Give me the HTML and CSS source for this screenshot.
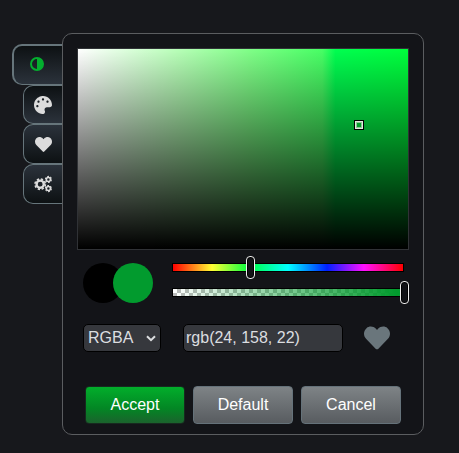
FILE: index.html
```html
<!DOCTYPE html>
<html lang="en">
<head>
<meta charset="utf-8">
<title>Color picker</title>
<link rel="stylesheet" href="styles.css">
</head>
<body>
<div class="picker">
  <nav class="tabs">
    <button class="tab active" aria-label="Adjust"><svg width="14" height="14" viewBox="0 0 14 14"><circle cx="7" cy="7" r="6" fill="none" stroke="currentColor" stroke-width="2"/><path fill="currentColor" d="M7 1a6 6 0 0 1 0 12z"/></svg></button>
    <button class="tab" aria-label="Palette"><svg width="18" height="18" viewBox="0 0 512 512"><path fill="currentColor" d="M204.3 5C104.9 24.4 24.8 104.3 5.2 203.4c-37 187 131.7 326.4 258.8 306.7 41.2-6.4 61.4-54.6 42.5-91.7-23.1-45.4 9.9-98.4 60.9-98.4h79.7c35.8 0 64.8-29.6 64.9-65.3C511.5 97.1 368.1-26.9 204.3 5zM96 320c-17.7 0-32-14.3-32-32s14.3-32 32-32 32 14.3 32 32-14.3 32-32 32zm32-128c-17.7 0-32-14.3-32-32s14.3-32 32-32 32 14.3 32 32-14.3 32-32 32zm128-64c-17.7 0-32-14.3-32-32s14.3-32 32-32 32 14.3 32 32-14.3 32-32 32zm128 64c-17.7 0-32-14.3-32-32s14.3-32 32-32 32 14.3 32 32-14.3 32-32 32z"/></svg></button>
    <button class="tab flip" aria-label="Favorites"><svg width="17" height="17" viewBox="0 0 512 512"><path fill="currentColor" d="M462.3 62.6C407.5 15.9 326 24.3 275.7 76.2L256 96.5l-19.7-20.3C186.1 24.3 104.5 15.9 49.7 62.6c-62.8 53.6-66.1 149.8-9.9 207.9l193.5 199.8c12.5 12.9 32.8 12.9 45.3 0l193.5-199.8c56.3-58.1 53-154.3-9.8-207.9z"/></svg></button>
    <button class="tab flip" aria-label="Settings"><svg width="18" height="18" viewBox="0 0 18 18" fill="none" stroke="currentColor"><circle cx="6.2" cy="9.2" r="3.6" stroke-width="2.4"/><circle cx="6.2" cy="9.2" r="5.2" stroke-width="1.6" stroke-dasharray="2.3 1.784"/><g id="cog"><circle cx="14.4" cy="4.4" r="2" stroke-width="1.5"/><circle cx="14.4" cy="4.4" r="3" stroke-width="1.1" stroke-dasharray="1.8 1.342"/></g><use href="#cog" y="9.2"/></svg></button>
  </nav>
  <main class="panel">
    <div class="field"><span class="marker"></span></div>
    <div class="controls">
      <div class="swatches"><span class="swatch old"></span><span class="swatch new"></span></div>
      <div class="sliders">
        <div class="track hue"><span class="thumb"></span></div>
        <div class="track alpha"><span class="thumb"></span></div>
      </div>
    </div>
    <div class="inputs">
      <div class="format">RGBA<svg width="10" height="7" viewBox="0 0 10 7"><path d="M1 1.2l4 4 4-4" fill="none" stroke="currentColor" stroke-width="2"/></svg></div>
      <div class="value">rgb(24, 158, 22)</div>
      <svg class="fav" width="26" height="26" viewBox="0 0 512 512"><path fill="currentColor" d="M462.3 62.6C407.5 15.9 326 24.3 275.7 76.2L256 96.5l-19.7-20.3C186.1 24.3 104.5 15.9 49.7 62.6c-62.8 53.6-66.1 149.8-9.9 207.9l193.5 199.8c12.5 12.9 32.8 12.9 45.3 0l193.5-199.8c56.3-58.1 53-154.3-9.8-207.9z"/></svg>
    </div>
    <div class="actions">
      <button class="btn accept">Accept</button>
      <button class="btn">Default</button>
      <button class="btn">Cancel</button>
    </div>
  </main>
</div>
</body>
</html>
```
FILE: styles.css
```css
* { box-sizing: border-box; }
body {
  margin: 0;
  height: 453px;
  overflow: hidden;
  background: #17181c;
  color: #dcdee0;
  font: 16px/20px "Liberation Sans", Arial, sans-serif;
}
.picker { display: flex; padding: 33px 0 0 12px; }
.tabs {
  display: flex;
  flex-direction: column;
  align-items: flex-end;
  width: 50px;
  padding-top: 11px;
}
.tab {
  display: flex;
  align-items: center;
  justify-content: center;
  width: 39px;
  height: 40px;
  padding: 0;
  border: 1px solid #66757b;
  border-right: 0;
  border-radius: 10px 0 0 10px;
  background: linear-gradient(#0d1113, #2b323b);
  color: #dcdcdc;
}
.tab.active {
  width: 50px;
  height: 41px;
  padding: 0 2px 2px 0;
  border-width: 2px 0 1px 2px;
  color: #04af2f;
}
.tab.flip { background: linear-gradient(#2b323b, #0d1113); }
.tab:nth-child(2) { height: 39px; }
.panel {
  width: 362px;
  height: 402px;
  padding: 14px;
  border: 1px solid #5b5d60;
  border-radius: 10px;
  background: #131418;
}
.field {
  position: relative;
  width: 332px;
  height: 202px;
  border: 1px solid #303236;
  background:
    linear-gradient(transparent, #000),
    linear-gradient(90deg, #fff, #b8ffb8 30%, #80ff88 52%, #48ff65 74%, #00ff50 78%, #00ff3c);
  background-clip: padding-box;
}
.marker {
  position: absolute;
  left: 276px;
  top: 71px;
  width: 10px;
  height: 10px;
  border: 1px solid #000;
  background: #049c2c;
  box-shadow: inset 0 0 0 1px #e0ebdf, inset 0 0 0 2px #8fc996;
}
.controls {
  display: flex;
  gap: 19px;
  height: 60px;
  padding: 13px 0 0 6px;
}
.swatches { display: flex; width: 70px; }
.swatch { flex: none; width: 40px; height: 40px; border-radius: 50%; }
.old { background: #000; }
.new { margin-left: -10px; background: #029b2e; }
.sliders { display: flex; flex-direction: column; gap: 16px; }
.track { position: relative; width: 232px; height: 9px; border: 1px solid #000; }
.hue { background: linear-gradient(90deg, #f00, #ff3 17%, #00ff40 33%, #0ff 50%, #0020ff 67%, #ff10ff 83%, #f00) padding-box; }
.alpha {
  background:
    linear-gradient(90deg, transparent, #029b2e 97%),
    repeating-conic-gradient(#bbb 0 25%, #fff 0 50%) 0 0 / 8px 8px;
}
.thumb {
  position: absolute;
  top: -8px;
  left: 73px;
  width: 9px;
  height: 23px;
  border: 1px solid #eee;
  border-radius: 4px;
  background: #111216;
  box-shadow: inset 0 0 0 1px #000;
}
.alpha .thumb { left: 227px; }
.inputs { display: flex; align-items: center; height: 28px; margin-top: 14px; padding-left: 6px; }
.format, .value {
  display: flex;
  align-items: center;
  height: 28px;
  border: 1px solid #000;
  border-radius: 5px;
  background: #36383d;
}
.format { justify-content: space-between; width: 78px; padding: 0 4px; }
.value { width: 160px; margin-left: 22px; padding-left: 2px; }
.fav { margin-left: 21px; color: #6a767c; }
.actions { display: flex; gap: 8px; margin-top: 34px; padding-left: 8px; }
.btn {
  width: 100px;
  height: 38px;
  padding: 0;
  border: 1px solid #65727a;
  border-radius: 4px;
  background: linear-gradient(#7e8386, #585c60);
  color: #fff;
  font: inherit;
}
.accept { border-color: #17291f; background: linear-gradient(#02ae2b, #038624 60%, #1b622d); }
```
